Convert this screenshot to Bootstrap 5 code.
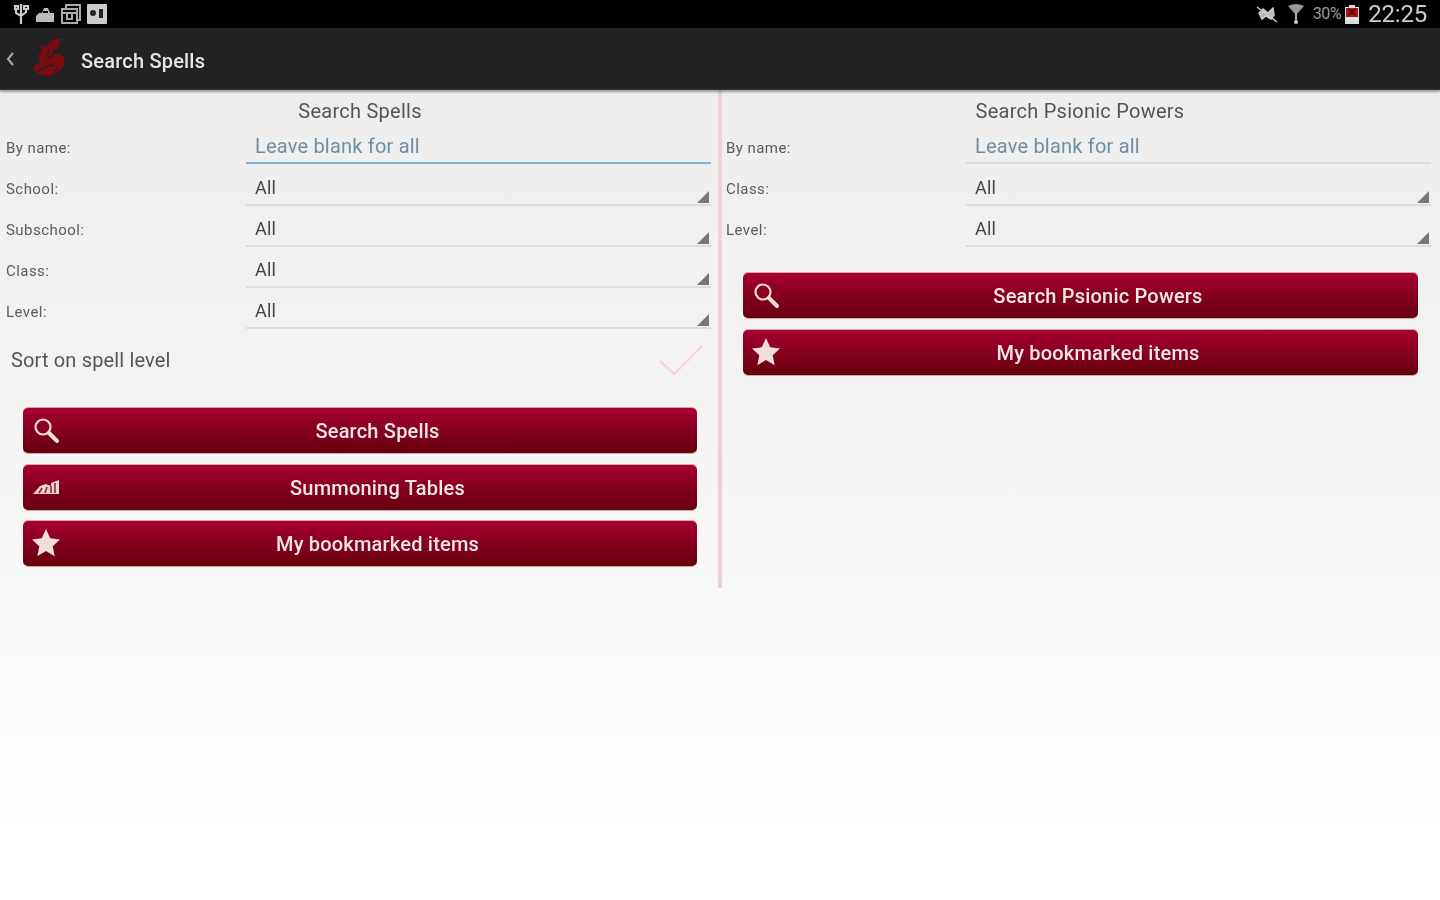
<!DOCTYPE html>
<html lang="en"><head><meta charset="utf-8"><title>Search Spells</title>
<link href="https://cdn.jsdelivr.net/npm/bootstrap@5.3.0/dist/css/bootstrap.min.css" rel="stylesheet">
<style>
html,body{height:100%;margin:0}
body{font-family:Roboto,"Liberation Sans",sans-serif;background:#fff;overflow:hidden;color:#444}
.app-frame{height:900px;display:flex;flex-direction:column;filter:blur(.5px)}
.status-strip{height:28px;background:#000;color:#bbb;flex:none;padding:0 13px 0 12px}
.status-clock{font-size:24px;line-height:28px;letter-spacing:-.2px;color:#ccc;margin-left:5px}
.status-pct{font-size:16px;color:#999;letter-spacing:-.4px;margin-left:3px}
.status-mute{margin-right:3px}
.title-bar{height:62px;background:#222;flex:none;box-shadow:0 2px 2px rgba(0,0,0,.35);border-bottom:1px solid #333;position:relative;z-index:1;padding-left:5px}
.title-text{font-size:20px;color:#e6e6e6;margin-left:12px;letter-spacing:.2px;font-weight:500;position:relative;top:2px}
.page-body{height:738px;flex:none;background:linear-gradient(#ededed 0,#f3f3f3 40%,#fff 100%)}
.pane-left{width:718px;height:498px;flex:none;padding-right:7px}
.pane-right{width:718px;flex:none;padding-left:4px}
.pane-rule{width:4px;height:498px;background:#ecd3d8;flex:none}
.pane-title{height:34px;font-size:20px;line-height:42px;text-align:center;color:#555;letter-spacing:.25px}
.pane-left .pane-title{padding-left:9px}
.pane-right .pane-title{padding-right:6px}
.form-line{height:41px;display:flex}
.pane-right .form-line{padding-right:9px}
.line-label{width:246px;padding-left:6px;font-size:15px;color:#5c5c5c;letter-spacing:.45px;line-height:49px;flex:none}
.pane-right .line-label{width:240px;padding-left:0}
.line-field{flex:1;position:relative;border-bottom:2px solid #dcdcdc;padding-left:9px;font-size:18px;line-height:46px;color:#444;letter-spacing:.2px}
.line-field.text-entry{font-size:20px;line-height:44px;color:#6f8ea3;height:40px;letter-spacing:.2px}
.line-field.focused{border-bottom-color:#7fb6d6}
.line-field.is-select::after{content:"";position:absolute;right:2px;bottom:1px;border-style:solid;border-width:0 0 12px 12px;border-color:transparent transparent #777 transparent}
.sort-row{height:60px;padding:2px 8px 0 11px;font-size:20px;color:#555;letter-spacing:.15px}
.action-stack{padding:0 14px 0 23px;display:flex;flex-direction:column;gap:11.5px;margin-top:19px}
.pane-right .action-stack{padding:0 22px 0 17px;margin-top:26px}
.action-btn{height:45px;border-radius:5px;border:0;background:linear-gradient(#a80030,#65000e);box-shadow:0 -1px 0 #d9a5b0,0 1px 0 #d9a5b0;color:#f3e6e6;font-size:20px;line-height:45px;text-align:center;position:relative;padding:0;width:100%;display:block;letter-spacing:.2px;font-weight:500}
.action-btn:hover{background:linear-gradient(#a80030,#65000e);color:#f3e6e6}
.btn-ico{position:absolute;left:9px;top:8px;width:28px;height:28px}
.btn-label{padding-left:35px;position:relative;top:1px}
</style></head>
<body>
<div class="app-frame">
 <div class="status-strip d-flex align-items-center justify-content-between">
  <div class="d-flex align-items-center gap-1">
   <svg width="18" height="24" viewBox="0 0 18 24"><path d="M9 2v20M4 6v5l5 3 5-4V6M3 4h3v3H3zM12 4h4v3h-4z" fill="none" stroke="#ccc" stroke-width="2.2"/></svg>
   <svg width="22" height="20" viewBox="0 0 22 20"><path d="M2 18v-6l3-3h3l2-5h4l2 5h4v9z" fill="#bbb"/><path d="M9 8h5" stroke="#000" stroke-width="2"/></svg>
   <svg width="22" height="22" viewBox="0 0 22 22"><path d="M6 5V2h14v15h-3M2 6h15v14H2zM2 10h15M7 10v6h5v-6" fill="none" stroke="#aaa" stroke-width="2"/></svg>
   <svg width="22" height="22" viewBox="0 0 22 22"><rect x="1" y="1" width="20" height="20" rx="1" fill="#ccc"/><circle cx="7" cy="10" r="3" fill="#222"/><path d="M13 6h4v9h-4z" fill="#222"/></svg>
  </div>
  <div class="d-flex align-items-center gap-1">
   <svg class="status-mute" width="24" height="20" viewBox="0 0 24 20"><path d="M2 3l20 15M4 9l4-4 5 4 5-5 1 7-3 4-5-3-4 3z" fill="#bbb" stroke="#ccc" stroke-width="1.5"/></svg>
   <svg width="20" height="22" viewBox="0 0 20 22"><path d="M2 3q8-4 16 0l-8 9z" fill="#999"/><path d="M10 10v7" stroke="#aaa" stroke-width="2"/><circle cx="10" cy="19" r="2" fill="#ccc"/></svg>
   <span class="status-pct">30%</span>
   <svg width="14" height="20" viewBox="0 0 14 20"><path d="M4 1h6v2h4v17H0V3h4z" fill="#ddd"/><path d="M1 4h12v9H1z" fill="#a01818"/><path d="M4 5l6 6M10 5l-6 6" stroke="#600" stroke-width="1.500"/></svg>
   <span class="status-clock">22:25</span>
  </div>
 </div>
 <div class="title-bar d-flex align-items-center">
  <svg width="10" height="16" viewBox="0 0 10 16"><path d="M8 2L3 8l5 6" fill="none" stroke="#aaa" stroke-width="2"/></svg>
  <svg class="ms-3" width="38" height="44" viewBox="0 0 36 44" preserveAspectRatio="none"><path d="M22 2l7 0-4 6 2 3-6 2-2 5 8-2 5 5-1 8-6 7-9 3-9-2-5-5 3-5 3 1 0-6-1-5 4-2-2-6 5 1 3-4z" fill="#7c0a0e"/><path d="M14 22l8-3M12 30l10-2M18 12l-3 6M6 34l6-3M20 36l5-5" stroke="#222" stroke-width="1.600" fill="none"/></svg>
  <span class="title-text">Search Spells</span>
 </div>
 <div class="page-body d-flex align-items-start">
  <div class="pane-left">
   <div class="pane-title">Search Spells</div>
   <div class="form-line"><div class="line-label">By name:</div><div class="line-field text-entry focused">Leave blank for all</div></div>
   <div class="form-line"><div class="line-label">School:</div><div class="line-field is-select">All</div></div>
   <div class="form-line"><div class="line-label">Subschool:</div><div class="line-field is-select">All</div></div>
   <div class="form-line"><div class="line-label">Class:</div><div class="line-field is-select">All</div></div>
   <div class="form-line"><div class="line-label">Level:</div><div class="line-field is-select">All</div></div>
   <div class="sort-row d-flex align-items-center justify-content-between">
    <span>Sort on spell level</span>
    <svg width="44" height="32" viewBox="0 0 44 32"><path d="M1 17l14 13L43 2" fill="none" stroke="#f6d5d9" stroke-width="2.400"/></svg>
   </div>
   <div class="action-stack">
    <button class="btn action-btn"><svg class="btn-ico" viewBox="0 0 28 28"><circle cx="11" cy="11" r="7.500" fill="none" stroke="#f0dcdc" stroke-width="2.200"/><path d="M17 17l8 8" stroke="#f0dcdc" stroke-width="4" stroke-linecap="round"/></svg><span class="btn-label">Search Spells</span></button>
    <button class="btn action-btn"><svg class="btn-ico" viewBox="0 0 28 28"><path d="M1 21l7-8 6-2 5 2v-3l8-3v14z" fill="#e8d2d2"/><path d="M7 20l3-5M13 20l2-6M19 13v7M23 10v10" stroke="#9a1a30" stroke-width="1.500"/></svg><span class="btn-label">Summoning Tables</span></button>
    <button class="btn action-btn"><svg class="btn-ico" viewBox="0 0 28 28"><path d="M14 0l4.200 9.300 9.800 1.100-7.300 6.800 2 10L14 22l-8.700 5.200 2-10L0 10.400l9.800-1.100z" fill="#f0dede"/></svg><span class="btn-label">My bookmarked items</span></button>
   </div>
  </div>
  <div class="pane-rule"></div>
  <div class="pane-right">
   <div class="pane-title">Search Psionic Powers</div>
   <div class="form-line"><div class="line-label">By name:</div><div class="line-field text-entry">Leave blank for all</div></div>
   <div class="form-line"><div class="line-label">Class:</div><div class="line-field is-select">All</div></div>
   <div class="form-line"><div class="line-label">Level:</div><div class="line-field is-select">All</div></div>
   <div class="action-stack">
    <button class="btn action-btn"><svg class="btn-ico" viewBox="0 0 28 28"><circle cx="11" cy="11" r="7.500" fill="none" stroke="#f0dcdc" stroke-width="2.200"/><path d="M17 17l8 8" stroke="#f0dcdc" stroke-width="4" stroke-linecap="round"/></svg><span class="btn-label">Search Psionic Powers</span></button>
    <button class="btn action-btn"><svg class="btn-ico" viewBox="0 0 28 28"><path d="M14 0l4.200 9.300 9.800 1.100-7.300 6.800 2 10L14 22l-8.700 5.200 2-10L0 10.400l9.800-1.100z" fill="#f0dede"/></svg><span class="btn-label">My bookmarked items</span></button>
   </div>
  </div>
 </div>
</div>
<script src="https://cdn.jsdelivr.net/npm/bootstrap@5.3.0/dist/js/bootstrap.bundle.min.js"></script>
</body></html>
